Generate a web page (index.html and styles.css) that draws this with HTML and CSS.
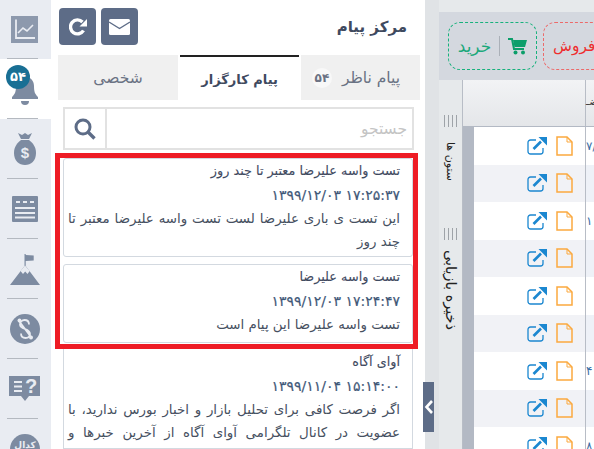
FILE: index.html
```html
<!DOCTYPE html>
<html lang="fa">
<head>
<meta charset="utf-8">
<title>مرکز پیام</title>
<link rel="stylesheet" href="styles.css">
</head>
<body>
<div class="app">
  <nav class="sidebar">
    <div class="nav-item"><svg width="27" height="27" viewBox="0 0 27 27"><rect class="fill" width="27" height="27" opacity=".85"/><path d="M5 3.500v18.500h19" fill="none" stroke="#e9ecf2" stroke-width="1.800"/><path d="M7 17l5-5 4 3 6-6" fill="none" stroke="#e9ecf2" stroke-width="1.600"/></svg></div>
    <div class="nav-item active">
      <span class="nav-badge"><bdi>۵۴</bdi></span>
      <svg class="bell" width="28" height="32" viewBox="0 0 28 32"><path class="fill" d="M14 0c1.500 0 2 1 2 2 5 1 7 5 7 9 0 6 1 8 4 11v2H1v-2c3-3 4-5 4-11 0-4 2-8 7-9 0-1 .5-2 2-2z"/><path class="fill" d="M10 26h8a4 4 0 0 1-8 0z"/></svg>
    </div>
    <div class="nav-item"><svg width="22" height="32" viewBox="0 0 22 32"><path class="fill" d="M4 0l4 2 3-2 3 2 4-2-3 6H7z"/><path class="fill" d="M7 7h8c4 3 7 7 7 13 0 8-5 12-11 12S0 28 0 20C0 14 3 10 7 7z"/><text x="11" y="25" class="bag-mark">$</text></svg></div>
    <div class="nav-item"><svg width="26" height="26" viewBox="0 0 26 26"><rect class="fill" width="26" height="26" rx="1"/><path d="M4 6h4M11 6h4M18 6h4M3 12h20M3 17h20M3 21.500h20" stroke="#e9ecf2" stroke-width="2.200"/></svg></div>
    <div class="nav-item"><svg width="30" height="31" viewBox="0 0 30 31"><path class="fill" d="M14.500 0h1.200v1l8 .5v5l-8 .5v5L30 31H0l14.500-19z"/><path d="M10.500 17l2.500 3 2.200-2.500 2.300 2.500 2.200-3-4.700-5.500z" fill="#e9ecf2"/></svg></div>
    <div class="nav-item"><svg width="30" height="30" viewBox="0 0 30 30"><circle class="fill" cx="15" cy="15" r="15"/><path d="M19 10.500c0-3-2-4.500-4.500-4.500S10 8 10 10.500 12 14 15 15s5 2.500 5 5-2 4-4.500 4-4.500-1.500-4.500-4.500M9 7l12 16" fill="none" stroke="#e9ecf2" stroke-width="1.800"/><circle cx="9.500" cy="6.500" r="2" fill="#e9ecf2"/><circle cx="21" cy="23.500" r="2" fill="#e9ecf2"/></svg></div>
    <div class="nav-item"><svg width="32" height="26" viewBox="0 0 32 26"><path class="fill" d="M0 0h31v20H20l-4 5-4-5H0z"/><path d="M5 6h8M5 10.500h8M5 15h8" stroke="#e9ecf2" stroke-width="2"/><text x="22" y="17" class="help-mark">?</text></svg></div>
    <div class="nav-item"><svg width="30" height="30" viewBox="0 0 30 30"><circle class="fill" cx="15" cy="15" r="15"/><text x="15" y="14" class="codal-mark">کدال</text></svg></div>
  </nav>

  <section class="panel">
    <header class="panel-head">
      <h1 class="panel-title">مرکز پیام</h1>
      <div class="head-actions">
        <button class="icon-btn" type="button" aria-label="ایمیل"><svg width="21" height="16" viewBox="0 0 21 16"><rect width="21" height="16" rx="1.500" fill="#fff"/><path d="M0 3l10.500 6.500L21 3" fill="none" stroke="#5d6c87" stroke-width="1.400"/></svg></button>
        <button class="icon-btn" type="button" aria-label="تازه‌سازی"><svg width="18" height="18" viewBox="0 0 18 18"><path d="M14.500 12.500A7 7 0 1 1 13.500 4" fill="none" stroke="#fff" stroke-width="3.400"/><path d="M18 1v7.500h-7.500z" fill="#fff"/></svg></button>
      </div>
    </header>

    <div class="tabs">
      <div class="tab tab-watch">پیام ناظر <span class="tab-count">۵۴</span></div>
      <div class="tab tab-active">پیام کارگزار</div>
      <div class="tab">شخصی</div>
    </div>

    <div class="search">
      <input class="search-input" type="text" placeholder="جستجو">
      <button class="search-btn" type="button" aria-label="جستجو"><svg width="22" height="22" viewBox="0 0 22 22"><circle cx="9" cy="9" r="7" fill="none" stroke="#5d6c87" stroke-width="3"/><path d="M14 14l6.500 6.500" stroke="#5d6c87" stroke-width="3.400"/></svg></button>
    </div>

    <div class="highlight">
      <article class="card">
        <h2 class="card-title">تست واسه علیرضا معتبر تا چند روز</h2>
        <div class="card-date"><bdi dir="ltr">۱۳۹۹/۱۲/۰۳ ۱۷:۲۵:۳۷</bdi></div>
        <p class="card-body">این تست ی باری علیرضا لست تست واسه علیرضا معتبر تا چند روز</p>
      </article>
      <article class="card">
        <h2 class="card-title">تست واسه علیرضا</h2>
        <div class="card-date"><bdi dir="ltr">۱۳۹۹/۱۲/۰۳ ۱۷:۲۴:۴۷</bdi></div>
        <p class="card-body">تست واسه علیرضا این پیام است</p>
      </article>
    </div>
    <article class="card card-open">
      <h2 class="card-title">آوای آگاه</h2>
      <div class="card-date"><bdi dir="ltr">۱۳۹۹/۱۱/۰۴ ۱۵:۱۴:۰۰</bdi></div>
      <p class="card-body card-just">اگر فرصت کافی برای تحلیل بازار و اخبار بورس ندارید، با عضویت در کانال تلگرامی آوای آگاه از آخرین خبرها و</p>
    </article>
  </section>

  <button class="collapse" type="button" aria-label="بستن"><svg width="10" height="16" viewBox="0 0 10 16"><path d="M8 2L2.500 8 8 14" fill="none" stroke="#fff" stroke-width="2.600"/></svg></button>

  <div class="gutter"></div>

  <main class="main">
    <div class="toolbar">
      <button class="trade buy" type="button"><span>خرید</span><i class="trade-sep"></i><svg width="19" height="17" viewBox="0 0 19 17"><path d="M0 1h4l2 10h10" fill="none" stroke="#0b9e6a" stroke-width="2"/><path d="M5 2h14l-2 7H6.500z" fill="#0b9e6a"/><circle cx="7.500" cy="14.500" r="2" fill="#0b9e6a"/><circle cx="15" cy="14.500" r="2" fill="#0b9e6a"/></svg></button>
      <button class="trade sell" type="button"><span>فروش</span></button>
    </div>
    <div class="workspace">
      <aside class="side-tabs">
        <div class="grip"></div>
        <div class="side-label side-label-a">ستون ها</div>
        <div class="grip grip-b"></div>
        <div class="side-label side-label-b">ذخیره بازیابی</div>
      </aside>
      <div class="grid">
        <div class="grid-head"><span class="head-cell">ضـ</span></div>
        <div class="rows">
          <div class="row"><span class="row-actions"><svg class="ico-link" viewBox="0 0 20 20"><use href="#link"/></svg><svg class="ico-file" viewBox="0 0 17 20"><use href="#file"/></svg></span><span class="row-cell">۷/</span></div>
          <div class="row alt"><span class="row-actions"><svg class="ico-link" viewBox="0 0 20 20"><use href="#link"/></svg><svg class="ico-file" viewBox="0 0 17 20"><use href="#file"/></svg></span><span class="row-cell"></span></div>
          <div class="row"><span class="row-actions"><svg class="ico-link" viewBox="0 0 20 20"><use href="#link"/></svg><svg class="ico-file" viewBox="0 0 17 20"><use href="#file"/></svg></span><span class="row-cell">۱</span></div>
          <div class="row alt"><span class="row-actions"><svg class="ico-link" viewBox="0 0 20 20"><use href="#link"/></svg><svg class="ico-file" viewBox="0 0 17 20"><use href="#file"/></svg></span><span class="row-cell"></span></div>
          <div class="row"><span class="row-actions"><svg class="ico-link" viewBox="0 0 20 20"><use href="#link"/></svg><svg class="ico-file" viewBox="0 0 17 20"><use href="#file"/></svg></span><span class="row-cell"></span></div>
          <div class="row alt"><span class="row-actions"><svg class="ico-link" viewBox="0 0 20 20"><use href="#link"/></svg><svg class="ico-file" viewBox="0 0 17 20"><use href="#file"/></svg></span><span class="row-cell"></span></div>
          <div class="row"><span class="row-actions"><svg class="ico-link" viewBox="0 0 20 20"><use href="#link"/></svg><svg class="ico-file" viewBox="0 0 17 20"><use href="#file"/></svg></span><span class="row-cell">۴</span></div>
          <div class="row alt"><span class="row-actions"><svg class="ico-link" viewBox="0 0 20 20"><use href="#link"/></svg><svg class="ico-file" viewBox="0 0 17 20"><use href="#file"/></svg></span><span class="row-cell"></span></div>
          <div class="row"><span class="row-actions"><svg class="ico-link" viewBox="0 0 20 20"><use href="#link"/></svg><svg class="ico-file" viewBox="0 0 17 20"><use href="#file"/></svg></span><span class="row-cell">۸</span></div>
        </div>
      </div>
    </div>
  </main>
</div>
<svg class="defs" width="0" height="0">
  <defs>
    <g id="link"><path d="M9 4H3.500A2.500 2.500 0 0 0 1 6.500v9A2.500 2.500 0 0 0 3.500 18h10a2.500 2.500 0 0 0 2.500-2.500V12" fill="none" stroke="#1b87d0" stroke-width="1.300"/><path d="M6.500 13l7.500-7.500" stroke="#1b87d0" stroke-width="2.600"/><path d="M11.500 1H20v8.500z" fill="#1b87d0"/></g>
    <g id="file"><path d="M1 1h10l5 5v13H1z" fill="none" stroke="#fba93f" stroke-width="1.500"/><path d="M11 1v5h5" fill="none" stroke="#fba93f" stroke-width="1"/></g>
  </defs>
</svg>
</body>
</html>
```
FILE: styles.css
```css
* { box-sizing: border-box; }
html, body { margin: 0; height: 100%; overflow: hidden; }
body { font-family: "DejaVu Sans", sans-serif; color: #3f4a5f; background: #fff; }
.defs { position: absolute; }
.app { display: flex; width: 594px; height: 449px; position: relative; overflow: hidden; }

.sidebar { width: 51px; flex: none; background: #e9ecf2; overflow: hidden; }
.nav-item { height: 60px; display: flex; align-items: center; justify-content: center; position: relative; padding-right: 2px; }
.nav-item:first-child { height: 59px; }
.nav-item + .nav-item::before { content: ""; position: absolute; left: 7px; right: 13px; top: -1px; height: 1px; background: #b4b9c0; }
.nav-item.active { background: #fff; }
.nav-badge { position: absolute; left: 6px; top: 6px; width: 24px; height: 24px; border-radius: 50%; background: #196f94; color: #fff; font-size: 13px; font-weight: 700; line-height: 24px; text-align: center; z-index: 1; }
.bell { margin-top: 4px; }
.fill { fill: #7d8ba1; }
.bag-mark { fill: #e9ecf2; font: 700 15px "Liberation Sans", sans-serif; text-anchor: middle; }
.help-mark { fill: #e9ecf2; font: 700 20px "Liberation Sans", sans-serif; text-anchor: middle; }
.codal-mark { fill: #e9ecf2; font: 700 9px "DejaVu Sans", sans-serif; text-anchor: middle; }

.panel { width: 374px; flex: none; background: #fff; display: flex; flex-direction: column; direction: rtl; }
.panel-head { height: 55px; display: flex; justify-content: space-between; padding: 8px 18px 0 0; flex: none; }
.panel-title { margin: 7px 0 0; font-size: 15px; font-weight: 700; line-height: 24px; color: #3f4a5f; }
.head-actions { display: flex; gap: 5px; margin-left: 8px; flex: none; }
.icon-btn { width: 37px; height: 37px; padding: 0; border: 0; border-radius: 4px; background: #5d6c87; display: flex; align-items: center; justify-content: center; }

.tabs { display: flex; height: 45px; gap: 2px; margin: 0 5px 0 7px; flex: none; }
.tab { flex: 0 0 119px; background: #f0f0f0; font-size: 15.500px; display: flex; align-items: center; justify-content: center; gap: 8px; color: #6a7283; }
.tab:last-child { flex-grow: 1; }
.tab-watch { gap: 10px; padding-right: 9px; }
.tab-active { background: #fff; border-top: 2px solid #222; font-size: 13px; font-weight: 700; color: #3f4a5f; padding-top: 2px; }
.tab-count { width: 20px; height: 20px; border-radius: 50%; background: #f8f8f8; font-size: 12px; font-weight: 700; line-height: 20px; text-align: center; }

.search { display: flex; height: 43px; margin: 7px 11px 0 12px; flex: none; border: 2px solid #e2e2e2; }
.search-input { flex: 1; min-width: 0; border: 0; padding: 0 5px; font: 15.500px "DejaVu Sans", sans-serif; direction: rtl; outline: none; }
.search-input::placeholder { color: #c4c4c4; }
.search-btn { width: 42px; padding: 0; border: 0; border-right: 2px solid #e2e2e2; background: #fff; display: flex; align-items: center; justify-content: center; }

.highlight { margin: 3px 7px 0 4px; border: 5px solid #ee1c25; padding: 0 0 1px 3px; display: flex; flex-direction: column; gap: 7px; flex: none; }
.card { min-height: 79px; border: 1px solid #d3d9e0; border-radius: 3px; padding: 0 12px 3px 4px; background: #fff; }
.card-title { margin: 0; font-size: 12.800px; font-weight: 400; line-height: 24px; color: #3f4a5f; -webkit-text-stroke: .1px #3f4a5f; }
.card-date { font-size: 14px; line-height: 24px; color: #3f5878; -webkit-text-stroke: .2px #3f5878; }
.card-body { margin: 0; font-size: 13.400px; line-height: 23px; color: #46505f; text-align: justify; }
.card-open { margin: 0 12px; border-top: 0; border-radius: 0; padding-top: 1px; flex: 1; }
.card-just { text-align-last: justify; }

.collapse { position: absolute; left: 423px; top: 382px; width: 11px; height: 50px; padding: 0; border: 0; background: #5d6c87; display: flex; align-items: center; justify-content: center; z-index: 2; }

.gutter { width: 14px; flex: none; background: #e0e3e6; }
.main { flex: 1; min-width: 0; display: flex; flex-direction: column; background: #e6e9eb; padding-top: 12px; overflow: hidden; }
.toolbar { height: 68px; flex: none; background: #d4d8df; display: flex; align-items: center; gap: 6px; padding-left: 9px; }
.trade { height: 48px; flex: none; border-radius: 12px; background: transparent; font: 17px "DejaVu Sans", sans-serif; display: flex; align-items: center; justify-content: center; gap: 8px; padding: 0; }
.buy { width: 89px; border: 1.500px dashed #17b17c; color: #1ba87a; }
.sell { width: 90px; border: 1.500px dashed #ec6a6a; color: #ee2e2e; justify-content: flex-start; padding-left: 9px; font-size: 15.500px; }
.trade-sep { width: 1px; height: 20px; background: #aab0b8; }

.workspace { flex: 1; display: flex; min-height: 0; }
.side-tabs { width: 24px; flex: none; background: #e6e9eb; border-right: 1px solid #b8bdc6; display: flex; flex-direction: column; align-items: center; padding-top: 35px; }
.grip { width: 14px; height: 12px; flex: none; background: repeating-linear-gradient(90deg, #9ea3a8 0 1px, transparent 1px 4px); }
.grip-b { margin-top: 47px; }
.side-label { writing-mode: vertical-rl; color: #222; white-space: nowrap; direction: rtl; }
.side-label-a { margin-top: 15px; height: 39px; font-size: 11px; }
.side-label-b { margin-top: 10px; font-size: 14.500px; }
.grid { flex: 1; display: flex; flex-direction: column; min-width: 0; }
.grid-head { height: 47px; flex: none; background: linear-gradient(#f2f3f5, #e4e6e9); border-bottom: 1px solid #b3b9c4; display: flex; justify-content: flex-end; font-size: 11px; color: #444; overflow: hidden; }
.head-cell { width: 9px; border-left: 1px solid #b8bdc6; line-height: 44px; white-space: nowrap; }
.rows { flex: 1; border-left: 11px solid #b3b9c4; }
.row { height: 37.500px; display: flex; background: #fff; }
.row.alt { background: #f1f2f6; }
.row-actions { width: 111px; flex: none; display: flex; justify-content: flex-end; align-items: center; gap: 9px; padding-right: 12px; }
.row-cell { flex: 1; border-left: 1px solid #b8bdc6; background: #eef1f7; font-size: 12px; color: #3a6ea5; overflow: hidden; white-space: nowrap; line-height: 38px; }
.row:not(.alt) .row-cell { background: #fff; }
.ico-link { width: 20px; height: 20px; }
.ico-file { width: 17px; height: 20px; }
```
